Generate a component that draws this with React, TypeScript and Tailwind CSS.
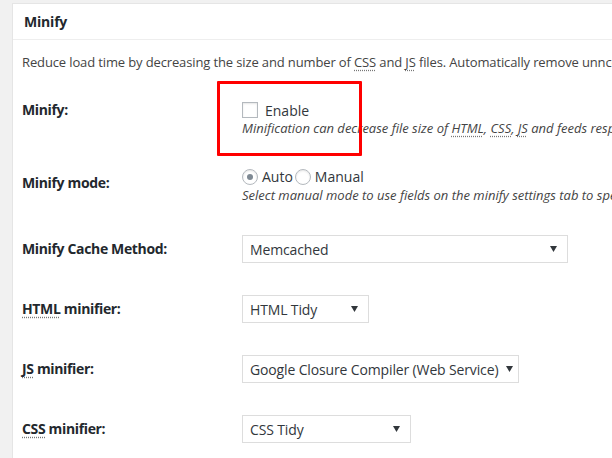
import type { ReactNode } from "react";

function Abbr({ children }: { children: ReactNode }) {
  return (
    <span className="underline decoration-dotted decoration-[#777] underline-offset-[3px]">
      {children}
    </span>
  );
}

function Select({ value, width }: { value: string; width: string }) {
  return (
    <div
      className={`${width} h-[28px] flex items-center justify-between gap-[8px] border border-[#dddddd] bg-white pl-[7px] pr-[10px] text-[14px] tracking-[-0.14px] text-[#32373c]`}
    >
      <span className="whitespace-nowrap">{value}</span>
      <svg width="7" height="6" viewBox="0 0 7 6" aria-hidden="true" className="shrink-0">
        <path d="M0 0h7L3.5 6z" fill="#32373c" />
      </svg>
    </div>
  );
}

function Row({
  label,
  labelTop,
  height,
  children,
}: {
  label: ReactNode;
  labelTop: string;
  height: string;
  children: ReactNode;
}) {
  return (
    <div className={`flex ${height}`}>
      <div
        className={`w-[220px] shrink-0 ${labelTop} text-[14px] font-bold leading-[18px] tracking-[-0.35px] text-[#23282d]`}
      >
        {label}
      </div>
      <div className="relative pt-[9px] min-w-0">{children}</div>
    </div>
  );
}

export default function App() {
  return (
    <div
      className="w-[612px] h-[458px] overflow-hidden bg-[#f1f1f1] pt-[3px] pl-[12px]"
      style={{ fontFamily: '"Open Sans", "Noto Sans", sans-serif' }}
    >
      <div className="w-[640px] h-[470px] bg-white border border-[#e5e5e5]">
        {/* Header */}
        <div className="h-[36px] border-b border-[#eeeeee] pl-[11px] flex items-center">
          <h2 className="text-[14px] font-bold tracking-[-0.2px] text-[#23282d]">Minify</h2>
        </div>

        {/* Description */}
        <p className="pl-[9px] pt-[13px] h-[52px] text-[13px] leading-[18px] tracking-[-0.13px] text-[#444] whitespace-nowrap">
          Reduce load time by decreasing the size and number of <Abbr>CSS</Abbr> and{" "}
          <Abbr>JS</Abbr> files. Automatically remove unncessary data from <Abbr>CSS</Abbr>,{" "}
          <Abbr>JS</Abbr>, feed, page and post <Abbr>HTML</Abbr>.
        </p>

        <div className="pl-[9px]">
          {/* Minify */}
          <Row label="Minify:" labelTop="pt-[9px]" height="h-[67px]">
            <label className="flex items-center h-[18px] text-[14px] text-[#32373c]">
              <span className="w-[16px] h-[16px] border border-[#b4b9be] bg-white shadow-[inset_0_1px_2px_rgba(0,0,0,0.1)] mr-[7px]" />
              Enable
            </label>
            <p className="text-[13px] italic leading-[19px] text-[#444] whitespace-nowrap">
              Minification can decrease file size of <Abbr>HTML</Abbr>, <Abbr>CSS</Abbr>,{" "}
              <Abbr>JS</Abbr> and feeds respectively by ~10% on average.
            </p>
            <div className="absolute left-[-25px] top-[-11px] w-[145px] h-[75px] border-[3px] border-[#ff0000] rounded-[1px]" />
          </Row>

          {/* Minify mode */}
          <Row label="Minify mode:" labelTop="pt-[15px]" height="h-[67px]">
            <div className="flex items-center h-[17px] text-[14px] text-[#32373c]">
              <span className="w-[16px] h-[16px] rounded-full border border-[#b4b9be] bg-white flex items-center justify-center mr-[4px] shadow-[inset_0_1px_2px_rgba(0,0,0,0.1)]">
                <span className="w-[6px] h-[6px] rounded-full bg-[#7e8993]" />
              </span>
              <span className="mr-[2px]">Auto</span>
              <span className="w-[16px] h-[16px] rounded-full border border-[#b4b9be] bg-white mr-[4px] shadow-[inset_0_1px_2px_rgba(0,0,0,0.1)]" />
              <span>Manual</span>
            </div>
            <p className="text-[13px] italic leading-[20px] text-[#444] whitespace-nowrap">
              Select manual mode to use fields on the minify settings tab to specify files to be
              minified, otherwise files will be minified automatically.
            </p>
          </Row>

          {/* Cache method */}
          <Row label="Minify Cache Method:" labelTop="pt-[14px]" height="h-[60px]">
            <Select value="Memcached" width="w-[326px]" />
          </Row>

          <Row
            label={
              <>
                <Abbr>HTML</Abbr> minifier:
              </>
            }
            labelTop="pt-[14px]"
            height="h-[60px]"
          >
            <Select value="HTML Tidy" width="w-[127px]" />
          </Row>

          <Row
            label={
              <>
                <Abbr>JS</Abbr> minifier:
              </>
            }
            labelTop="pt-[14px]"
            height="h-[60px]"
          >
            <Select value="Google Closure Compiler (Web Service)" width="w-[277px]" />
          </Row>

          <Row
            label={
              <>
                <Abbr>CSS</Abbr> minifier:
              </>
            }
            labelTop="pt-[14px]"
            height="h-[60px]"
          >
            <Select value="CSS Tidy" width="w-[169px]" />
          </Row>
        </div>
      </div>
    </div>
  );
}
